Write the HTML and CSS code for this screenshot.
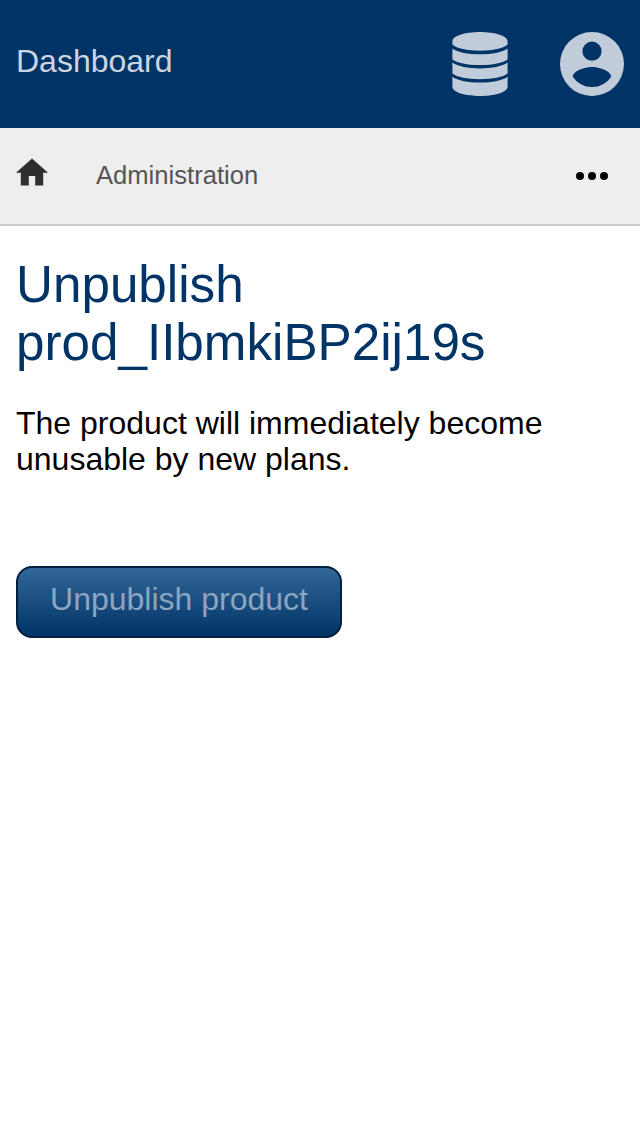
FILE: index.html
```html
<!DOCTYPE html>
<html lang="en">
<head>
<meta charset="utf-8">
<title>Unpublish product</title>
<link rel="stylesheet" href="styles.css">
</head>
<body>
<header class="topbar">
  <a class="brand">Dashboard</a>
  <nav class="menus">
    <svg class="icon-db" viewBox="0 0 56 64"><path d="M28 0C13 0 .4 4 .4 9.300v3.200C5 16.500 15 18.700 28 18.700s23-2.200 27.600-6.200V9.300C55.600 4 43 0 28 0zM.4 16.500C6 20.500 16 22.300 28 22.300s22-1.800 27.600-5.800v11C51 31 41 33 28 33S5 31 .4 27.500zM.4 30.600C6 34.600 16 36.400 28 36.400s22-1.800 27.600-5.800v11C51 45.200 41 47.200 28 47.200S5 45.200 .4 41.600zM.4 44.800C6 48.800 16 50.600 28 50.600s22-1.800 27.600-5.800v9.900C55.600 60 43 64 28 64S.4 60 .4 54.700z"/></svg>
    <svg class="icon-user" viewBox="0 0 20 20"><path d="M10 0a10 10 0 1 0 0 20 10 10 0 0 0 0-20zm0 3a3 3 0 1 1 0 6 3 3 0 0 1 0-6zm0 14.200a7.200 7.200 0 0 1-6-3.220c.03-1.990 4-3.080 6-3.080s5.970 1.090 6 3.080a7.200 7.200 0 0 1-6 3.220z"/></svg>
  </nav>
</header>
<nav class="crumbs">
  <svg class="icon-home" viewBox="0 0 32 28"><path d="M12.800 27.600V18h6.400v9.600h8V14.800H32L16 .4 0 14.800h4.800v12.800z"/></svg>
  <a class="crumb">Administration</a>
  <svg class="icon-more" viewBox="0 0 32 8"><circle cx="4" cy="4" r="4"/><circle cx="16" cy="4" r="4"/><circle cx="28" cy="4" r="4"/></svg>
</nav>
<main class="content">
  <h1 class="title">Unpublish prod_IIbmkiBP2ij19s</h1>
  <p class="message">The product will immediately become unusable by new plans.</p>
  <button class="submit">Unpublish product</button>
</main>
</body>
</html>
```
FILE: styles.css
```css
* { box-sizing: border-box; }
body { margin: 0; background: #fff; color: #000; font-family: "Liberation Sans", Arial, sans-serif; }
.topbar { display: flex; justify-content: space-between; height: 128px; padding: 32px 16px; background: #036; color: #ccd6e0; }
.brand { padding-top: 11px; font-size: 32px; line-height: 36px; }
.menus { display: flex; gap: 52px; fill: #c0ccd9; }
.icon-db { width: 56px; height: 64px; }
.icon-user { width: 64px; height: 64px; }
.crumbs { display: flex; align-items: flex-start; height: 98px; padding: 0 32px 0 16px; background: #eee; border-bottom: 2px solid #ccc; }
.icon-home { width: 32px; height: 28px; margin-top: 30px; fill: #2e2e2e; }
.crumb { margin: 33px 0 0 48px; font-size: 25.6px; line-height: 29px; color: #555; }
.icon-more { width: 32px; height: 8px; margin: 44px 0 0 auto; }
.content { padding: 30px 16px; }
.title { margin: 0; font-size: 51.2px; font-weight: 400; line-height: 58px; color: #036; }
.message { margin: 33px 0 0; font-size: 32px; line-height: 36px; }
.submit { display: block; width: 326px; height: 72px; margin-top: 89px; padding: 0 0 6px; border: 2px solid #001f3d; border-radius: 16px; background: linear-gradient(#369, #036); color: #8ca5c0; font: 32px "Liberation Sans", Arial, sans-serif; }
```
